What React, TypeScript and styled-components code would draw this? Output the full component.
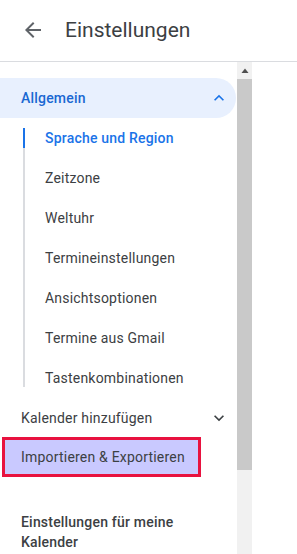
import { FC } from "react";
import styled, { createGlobalStyle } from "styled-components";

const GlobalStyle = createGlobalStyle`
  html, body {
    margin: 0;
    padding: 0;
    background: #fff;
    font-family: Roboto, "Liberation Sans", Arial, sans-serif;
    -webkit-font-smoothing: antialiased;
  }
`;

const subItems = [
  "Sprache und Region",
  "Zeitzone",
  "Weltuhr",
  "Termineinstellungen",
  "Ansichtsoptionen",
  "Termine aus Gmail",
  "Tastenkombinationen",
];

const ChevronUp: FC<{ color: string }> = ({ color }) => (
  <svg width="20" height="20" viewBox="0 0 24 24" fill={color}>
    <path d="M12 8l-6 6 1.41 1.41L12 10.83l4.59 4.58L18 14z" />
  </svg>
);

const ChevronDown: FC<{ color: string }> = ({ color }) => (
  <svg width="20" height="20" viewBox="0 0 24 24" fill={color}>
    <path d="M16.59 8.59L12 13.17 7.41 8.59 6 10l6 6 6-6z" />
  </svg>
);

const App: FC = () => {
  return (
    <>
      <GlobalStyle />
      <Page>
        <Header>
          <BackButton>
            <svg width="24" height="24" viewBox="0 0 24 24" fill="#5f6368">
              <path d="M20 11H7.83l5.59-5.59L12 4l-8 8 8 8 1.41-1.41L7.83 13H20v-2z" />
            </svg>
          </BackButton>
          <Title>Einstellungen</Title>
        </Header>

        <Body>
          <Nav>
            <SectionRow $active>
              <span>Allgemein</span>
              <ChevronUp color="#1a73e8" />
            </SectionRow>

            <SubList>
              {subItems.map((item, index) => (
                <SubItem key={item} $active={index === 0}>
                  {item}
                </SubItem>
              ))}
            </SubList>

            <SectionRow>
              <span>Kalender hinzufügen</span>
              <ChevronDown color="#3c4043" />
            </SectionRow>

            <HighlightedItem>Importieren &amp; Exportieren</HighlightedItem>

            <GroupTitle>Einstellungen für meine Kalender</GroupTitle>
          </Nav>

          <Scrollbar>
            <ScrollButton>
              <svg width="8" height="6" viewBox="0 0 8 6" fill="#505050">
                <path d="M4 0.5L7.5 5H0.5z" />
              </svg>
            </ScrollButton>
            <ScrollThumb />
            <ScrollTrack />
          </Scrollbar>

          <Main />
        </Body>
      </Page>
    </>
  );
};

export default App;

const Page = styled.div`
  height: 100vh;
  display: flex;
  flex-direction: column;
  overflow: hidden;
`;

const Header = styled.header`
  height: 61px;
  flex-shrink: 0;
  display: flex;
  align-items: center;
  padding-left: 21px;
  gap: 20px;
  border-bottom: 1px solid #dadce0;
`;

const BackButton = styled.div`
  width: 24px;
  height: 24px;
  display: flex;
  margin-top: -2px;
`;

const Title = styled.h1`
  margin: 0 0 2px 0;
  font-size: 21px;
  font-weight: 400;
  color: #3c4043;
`;

const Body = styled.div`
  flex: 1;
  display: flex;
  min-height: 0;
`;

const Nav = styled.nav`
  width: 237px;
  flex-shrink: 0;
  padding-top: 16px;
  display: flex;
  flex-direction: column;
  overflow: hidden;
  letter-spacing: 0.2px;
`;

const SectionRow = styled.div<{ $active?: boolean }>`
  height: 40px;
  flex-shrink: 0;
  margin-right: 1px;
  display: flex;
  align-items: center;
  justify-content: space-between;
  padding: 0 7px 0 21px;
  font-size: 14px;
  font-weight: ${(p) => (p.$active ? 500 : 400)};
  color: ${(p) => (p.$active ? "#1967d2" : "#3c4043")};
  background: ${(p) => (p.$active ? "#e8f0fe" : "transparent")};
  border-radius: 0 20px 20px 0;

  svg {
    flex-shrink: 0;
  }
`;

const SubList = styled.div`
  position: relative;
  display: flex;
  flex-direction: column;

  &::before {
    content: "";
    position: absolute;
    left: 23px;
    top: 10px;
    bottom: 11px;
    width: 2px;
    background: #dadce0;
  }
`;

const SubItem = styled.div<{ $active?: boolean }>`
  position: relative;
  height: 40px;
  flex-shrink: 0;
  display: flex;
  align-items: center;
  padding-left: 45px;
  font-size: 14px;
  font-weight: ${(p) => (p.$active ? 500 : 400)};
  color: ${(p) => (p.$active ? "#1a73e8" : "#3c4043")};

  &::before {
    content: "";
    display: ${(p) => (p.$active ? "block" : "none")};
    position: absolute;
    left: 23px;
    top: 10px;
    width: 2px;
    height: 20px;
    background: #1a73e8;
  }
`;

const HighlightedItem = styled.div`
  height: 34px;
  flex-shrink: 0;
  width: 177px;
  margin: -1px 0 0 2px;
  display: flex;
  align-items: center;
  padding-left: 16px;
  background: #c9c9ff;
  border: 3px solid #e8123f;
  font-size: 14px;
  color: #3c4043;
`;

const GroupTitle = styled.div`
  margin-top: 35px;
  padding: 0 40px 0 21px;
  font-size: 14px;
  font-weight: 500;
  line-height: 20px;
  color: #3c4043;
`;

const Scrollbar = styled.div`
  width: 15px;
  flex-shrink: 0;
  display: flex;
  flex-direction: column;
  background: #f1f1f1;
`;

const ScrollButton = styled.div`
  height: 17px;
  display: flex;
  align-items: center;
  justify-content: center;
`;

const ScrollThumb = styled.div`
  height: 391px;
  background: #c9c9c9;
`;

const ScrollTrack = styled.div`
  flex: 1;
`;

const Main = styled.main`
  flex: 1;
  background: #fff;
`;
